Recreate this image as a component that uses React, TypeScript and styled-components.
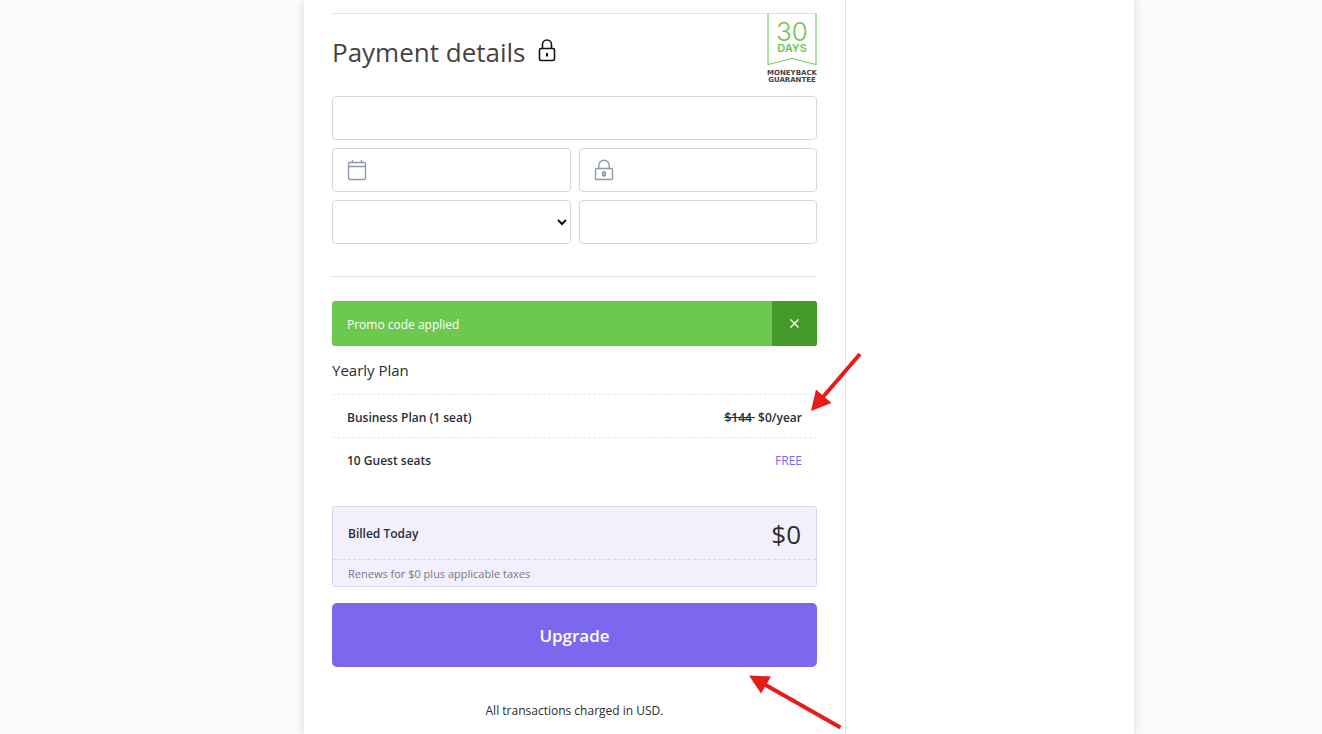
import React from "react";
import styled, { createGlobalStyle } from "styled-components";

const GlobalStyle = createGlobalStyle`
  *, *::before, *::after { box-sizing: border-box; }
  body {
    margin: 0;
    background: #fbfbfb;
    color: #292d34;
    font-family: "Segoe UI", "Open Sans", "Noto Sans", sans-serif;
    font-size: 12px;
    line-height: 20px;
  }
`;

const Page = styled.div`
  display: flex;
  justify-content: center;
  min-height: 100vh;
  padding-left: 116px;
`;

const Panel = styled.div`
  display: flex;
  flex: 0 1 830px;
  background: #fff;
  box-shadow: 0 0 10px rgba(0, 0, 0, 0.14);
`;

const Checkout = styled.main`
  flex: 0 1 542px;
  padding: 13px 28px 12px;
  border-right: 1px solid #e4e4e4;
`;

const PaymentSection = styled.section`
  padding-bottom: 32px;
  border-top: 1px solid #e4e4e4;
  border-bottom: 1px solid #e4e4e4;
`;

const SectionHeader = styled.header`
  display: flex;
  justify-content: space-between;
  align-items: flex-start;
  height: 82px;
`;

const Title = styled.h1`
  display: flex;
  align-items: center;
  gap: 12px;
  margin: 0;
  padding-top: 16px;
  color: #444;
  font-size: 26px;
  font-weight: 400;
  line-height: 44px;
`;

const Badge = styled.svg`
  display: block;
  margin-top: -1px;
`;

const FieldGrid = styled.form`
  display: grid;
  grid-template-columns: 1fr 1fr;
  gap: 8px;
`;

const Field = styled.label<{ $wide?: boolean }>`
  display: flex;
  align-items: center;
  grid-column: ${(p) => (p.$wide ? "1 / -1" : "auto")};
  height: 44px;
  border: 1px solid #d6d6d6;
  border-radius: 4px;
  background: #fff;

  > svg {
    flex: none;
    margin-left: 14px;
  }
`;

const TextInput = styled.input`
  flex: 1;
  min-width: 0;
  height: 100%;
  padding: 0 14px;
  border: 0;
  outline: 0;
  background: transparent;
  font: inherit;
`;

const Select = styled.select`
  width: 100%;
  height: 100%;
  border: 0;
  border-radius: 4px;
  outline: 0;
  background: #fff;
  color: #111;
  font: inherit;
`;

const Promo = styled.div`
  display: flex;
  height: 45px;
  margin-top: 24px;
  overflow: hidden;
  border-radius: 3px;
  background: #6bc950;
  color: #fff;
`;

const PromoText = styled.p`
  flex: 1;
  margin: 0;
  padding: 14px 15px 0;
  font-weight: 500;
`;

const PromoClose = styled.button`
  display: flex;
  align-items: center;
  justify-content: center;
  width: 45px;
  padding: 0;
  border: 0;
  background: #449a28;
  color: #fff;
`;

const PlanTitle = styled.h2`
  margin: 14px 0 13px;
  font-size: 15px;
  font-weight: 400;
  line-height: 21px;
`;

const PlanRow = styled.div`
  position: relative;
  display: flex;
  justify-content: space-between;
  height: 43px;
  padding: 13px 15px 0;
  border-top: 1px dashed #e6e6e6;
  font-weight: 600;
`;

const Price = styled.span<{ $free?: boolean }>`
  color: ${(p) => (p.$free ? "#7b68ee" : "inherit")};
  font-weight: ${(p) => (p.$free ? 500 : 600)};
`;

const Summary = styled.section`
  margin-top: 26px;
  border: 1px solid #d9d3fa;
  border-radius: 3px;
  background: #f2f0fd;
`;

const Total = styled.div`
  display: flex;
  align-items: center;
  justify-content: space-between;
  height: 53px;
  padding: 1px 15px 0;
  border-bottom: 1px dashed #d9d3fa;
  font-weight: 600;
`;

const Amount = styled.span`
  font-size: 26px;
  font-weight: 400;
  line-height: 40px;
`;

const Renewal = styled.p`
  margin: 0;
  padding: 4px 15px 2px;
  color: #7c7589;
  font-size: 11px;
`;

const UpgradeWrap = styled.div`
  position: relative;
  margin-top: 16px;
`;

const UpgradeButton = styled.button`
  width: 100%;
  height: 64px;
  padding: 2px 0 0;
  border: 0;
  border-radius: 5px;
  background: #7b68ee;
  color: #fff;
  font: inherit;
  font-size: 17px;
  font-weight: 600;
`;

const Footnote = styled.p`
  margin: 34px 0 0;
  text-align: center;
`;

const Arrow = styled.svg<{ $top: number; $right: number }>`
  position: absolute;
  top: ${(p) => p.$top}px;
  right: ${(p) => p.$right}px;
  pointer-events: none;
`;

const TitleLock = () => (
  <svg width="18" height="26" viewBox="0 0 18 26" fill="none" stroke="#111" strokeWidth="1.6" aria-hidden="true">
    <path d="M4.500 9.500V5.500a4.500 4.500 0 0 1 9 0v4" />
    <rect x="1.500" y="9.500" width="15" height="12" rx="1.600" />
    <path d="M9 14v3.500" strokeWidth="2" />
  </svg>
);

const CalendarIcon = () => (
  <svg width="20" height="22" viewBox="0 0 20 22" fill="none" stroke="#8f98a9" strokeWidth="1.4" aria-hidden="true">
    <rect x="1.500" y="3.500" width="17" height="17" rx="1.200" />
    <path d="M1.500 7.500h17M5.500 1v2.500M14.500 1v2.500" />
  </svg>
);

const FieldLock = () => (
  <svg width="20" height="22" viewBox="0 0 20 22" fill="none" stroke="#8f98a9" strokeWidth="1.4" aria-hidden="true">
    <path d="M4.800 9.500V6.500a5.200 5.200 0 0 1 10.400 0v3" />
    <rect x="1.500" y="9.500" width="17" height="11" rx="1" />
    <ellipse cx="10" cy="14.800" rx="1.300" ry="2" strokeWidth="1.800" />
  </svg>
);

const Guarantee = () => (
  <Badge width="50" height="71" viewBox="0 0 50 71" role="img" aria-label="30 days moneyback guarantee">
    <path d="M1 0V51.500L25 45.500L49 51.500V0" fill="#fff" stroke="#7dcc67" strokeWidth="1.2" />
    <path d="M0 0.500H50" stroke="#d3e5cf" />
    <g textAnchor="middle" fontFamily="Inter, sans-serif" fill="#6bc950">
      <text x="25" y="28" fontSize="26" fontWeight="300">30</text>
      <text x="25" y="39" fontSize="11" fontWeight="600">DAYS</text>
    </g>
    <g textAnchor="middle" fontFamily="DejaVu Sans, sans-serif" fontSize="7" fontWeight="700" fill="#444">
      <text x="25" y="62">MONEYBACK</text>
      <text x="25" y="69">GUARANTEE</text>
    </g>
  </Badge>
);

export default function App() {
  return (
    <>
      <GlobalStyle />
      <Page>
        <Panel>
          <Checkout>
            <PaymentSection>
              <SectionHeader>
                <Title>
                  Payment details
                  <TitleLock />
                </Title>
                <Guarantee />
              </SectionHeader>
              <FieldGrid>
                <Field $wide>
                  <TextInput aria-label="Card number" />
                </Field>
                <Field>
                  <CalendarIcon />
                  <TextInput aria-label="Expiry date" />
                </Field>
                <Field>
                  <FieldLock />
                  <TextInput aria-label="Security code" />
                </Field>
                <Field>
                  <Select aria-label="Country" defaultValue="">
                    <option value="" />
                  </Select>
                </Field>
                <Field>
                  <TextInput aria-label="Postal code" />
                </Field>
              </FieldGrid>
            </PaymentSection>

            <Promo role="status">
              <PromoText>Promo code applied</PromoText>
              <PromoClose type="button" aria-label="Dismiss">
                <svg width="9" height="9" viewBox="0 0 9 9" stroke="currentColor" strokeWidth="1.4" aria-hidden="true">
                  <path d="M0.500 0.500l8 8M8.500 0.500l-8 8" />
                </svg>
              </PromoClose>
            </Promo>

            <PlanTitle>Yearly Plan</PlanTitle>
            <PlanRow>
              <span>Business Plan (1 seat)</span>
              <Price>
                <s>$144&nbsp;</s> $0/year
              </Price>
              <Arrow $top={-44} $right={-46} width="52" height="60" viewBox="0 0 52 60" aria-hidden="true">
                <path d="M49 3L12 46" stroke="#e81b1b" strokeWidth="4" />
                <path d="M0 60L5 38.500L20.500 52Z" fill="#e81b1b" />
              </Arrow>
            </PlanRow>
            <PlanRow>
              <span>10 Guest seats</span>
              <Price $free>FREE</Price>
            </PlanRow>

            <Summary>
              <Total>
                <span>Billed Today</span>
                <Amount>$0</Amount>
              </Total>
              <Renewal>Renews for $0 plus applicable taxes</Renewal>
            </Summary>

            <UpgradeWrap>
              <UpgradeButton type="button">Upgrade</UpgradeButton>
              <Arrow $top={72} $right={-26} width="94" height="56" viewBox="0 0 94 56" aria-hidden="true">
                <path d="M91.500 52.500L14 8.500" stroke="#e81b1b" strokeWidth="4" />
                <path d="M0 0.500L22 1.500L12 18.500Z" fill="#e81b1b" />
              </Arrow>
            </UpgradeWrap>
            <Footnote>All transactions charged in USD.</Footnote>
          </Checkout>
        </Panel>
      </Page>
    </>
  );
}
